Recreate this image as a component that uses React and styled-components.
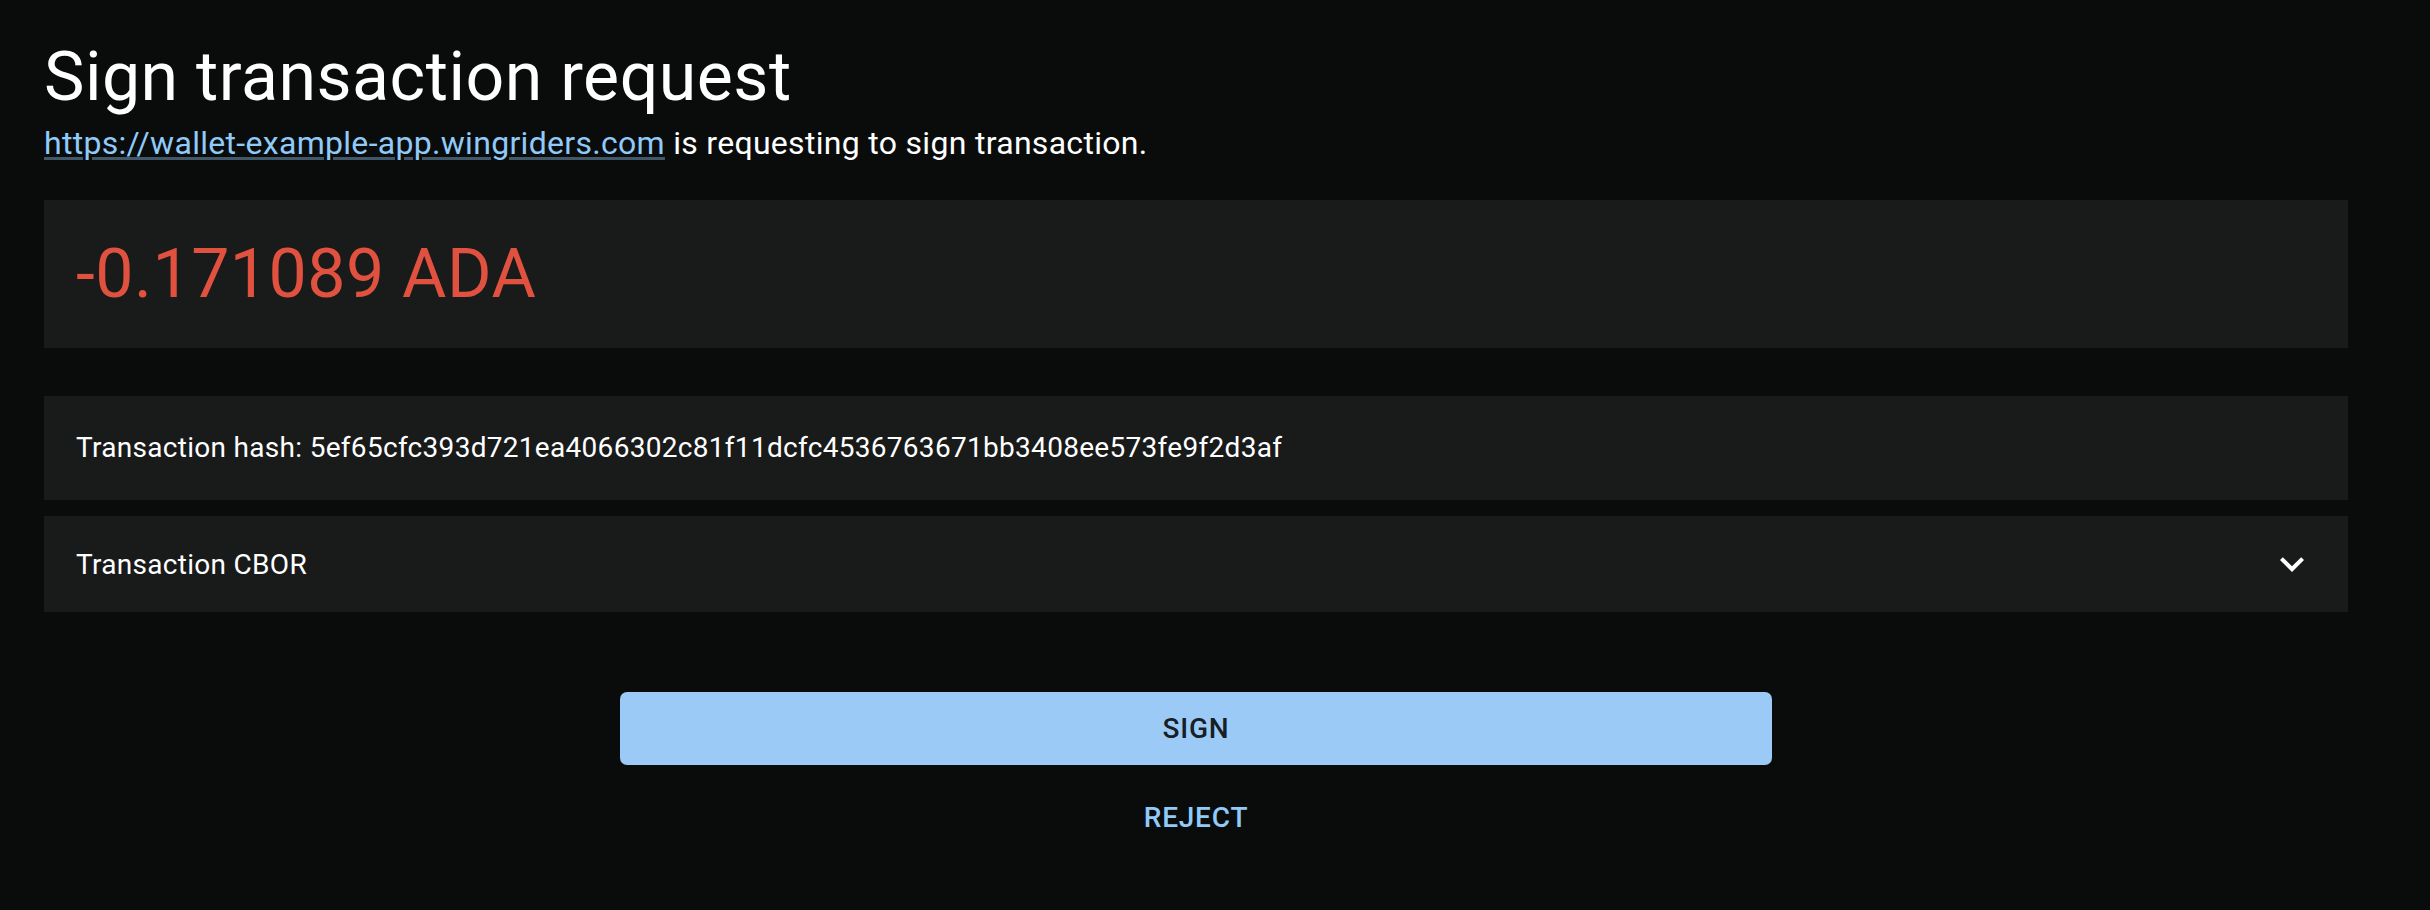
import React from 'react';
import styled, { createGlobalStyle } from 'styled-components';

const GlobalStyle = createGlobalStyle`
  html, body {
    margin: 0;
    padding: 0;
    background: #0a0c0b;
    color: #fff;
    font-family: Roboto, "Liberation Sans", sans-serif;
  }
`;

const Page = styled.div`
  min-height: 910px;
  box-sizing: border-box;
  padding: 35px 82px 0 44px;
  background: #0a0c0b;
`;

const Title = styled.h1`
  margin: 0;
  font-size: 68px;
  font-weight: 400;
  line-height: 84px;
  letter-spacing: 0.5px;
  color: #fff;
`;

const Subtitle = styled.div`
  font-size: 32px;
  line-height: 48px;
  letter-spacing: 0.3px;
`;

const Link = styled.a`
  color: #90caf9;
  text-decoration: underline;
  text-decoration-color: rgba(144, 202, 249, 0.4);
  text-decoration-thickness: 3px;
  text-underline-offset: 3px;
`;

const Card = styled.div`
  background: #191a1a;
  margin-top: ${props => props.gap || 0}px;
`;

const Amount = styled.div`
  padding: 32px;
  font-size: 68px;
  line-height: 84px;
  letter-spacing: 0.5px;
  color: #e0523f;
`;

const HashRow = styled.div`
  padding: 32px;
  font-size: 28px;
  line-height: 40px;
  letter-spacing: 0.3px;
`;

const Summary = styled.div`
  display: flex;
  align-items: center;
  justify-content: space-between;
  min-height: 96px;
  padding: 0 32px;
  font-size: 28px;
  letter-spacing: 0.3px;
  cursor: pointer;
`;

const Actions = styled.div`
  display: flex;
  flex-direction: column;
  align-items: center;
  margin-top: 80px;
  gap: 16px;
`;

const Button = styled.button`
  width: ${props => (props.primary ? '50%' : 'auto')};
  padding: 12px 44px;
  border: none;
  border-radius: 7px;
  background: ${props => (props.primary ? '#9ccaf6' : 'transparent')};
  color: ${props => (props.primary ? 'rgba(0, 0, 0, 0.87)' : '#90caf9')};
  font-family: Roboto, "Liberation Sans", sans-serif;
  font-size: 28px;
  font-weight: 500;
  line-height: 49px;
  letter-spacing: 0.8px;
  text-transform: uppercase;
  cursor: pointer;
`;

const ExpandIcon = () => (
  <svg width="48" height="48" viewBox="0 0 24 24" fill="#fff">
    <path d="M16.59 8.59 12 13.17 7.41 8.59 6 10l6 6 6-6z" />
  </svg>
);

const App = () => (
  <Page>
    <GlobalStyle />
    <Title>Sign transaction request</Title>
    <Subtitle>
      <Link href="#">https://wallet-example-app.wingriders.com</Link> is requesting to sign transaction.
    </Subtitle>
    <Card gap={33}>
      <Amount>-0.171089 ADA</Amount>
    </Card>
    <Card gap={48}>
      <HashRow>
        Transaction hash: 5ef65cfc393d721ea4066302c81f11dcfc4536763671bb3408ee573fe9f2d3af
      </HashRow>
    </Card>
    <Card gap={16}>
      <Summary>
        <span>Transaction CBOR</span>
        <ExpandIcon />
      </Summary>
    </Card>
    <Actions>
      <Button primary>Sign</Button>
      <Button>Reject</Button>
    </Actions>
  </Page>
);

export default App;
